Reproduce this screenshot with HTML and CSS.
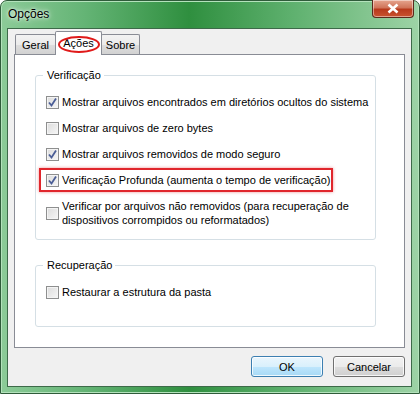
FILE: index.html
```html
<!doctype html>
<html lang="pt">
  <head>
    <meta charset="UTF-8" />
    <title>Opções</title>
    <link rel="stylesheet" href="styles.css">
  </head>
  <body>
    <div class="window">
      <div class="titlebar">
        <span class="title">Opções</span>
        <button class="close-btn">
          <svg width="14" height="11" viewBox="0 0 14 11">
            <path d="M2.5 1.5 L11.5 9.5 M11.5 1.5 L2.5 9.5" stroke="#fff" stroke-width="2.6" />
          </svg>
        </button>
      </div>

      <div class="client">
        <div class="tabs">
          <div class="tab tab-geral">Geral</div>
          <div class="tab active">
            Ações
            <span class="circle"></span>
          </div>
          <div class="tab tab-sobre">Sobre</div>
        </div>

        <div class="panel">
          <div class="group group-verif">
            <div class="group-title">Verificação</div>
            <label class="check">
              <span class="box checked"></span>
              <span>Mostrar arquivos encontrados em diretórios ocultos do sistema</span>
            </label>
            <label class="check">
              <span class="box"></span>
              <span>Mostrar arquivos de zero bytes</span>
            </label>
            <label class="check">
              <span class="box checked"></span>
              <span>Mostrar arquivos removidos de modo seguro</span>
            </label>
            <label class="check highlight">
              <span class="box checked"></span>
              <span>Verificação Profunda (aumenta o tempo de verificação)</span>
            </label>
            <label class="check multi">
              <span class="box"></span>
              <span class="multi-text">Verificar por arquivos não removidos (para recuperação de dispositivos corrompidos ou reformatados)</span>
            </label>
          </div>

          <div class="group group-recup">
            <div class="group-title">Recuperação</div>
            <label class="check">
              <span class="box"></span>
              <span>Restaurar a estrutura da pasta</span>
            </label>
          </div>
        </div>

        <div class="buttons">
          <button class="btn default">OK</button>
          <button class="btn">Cancelar</button>
        </div>
      </div>
    </div>
  </body>
</html>
```

FILE: styles.css
```css
* {
  box-sizing: border-box;
  margin: 0;
  padding: 0;
}

body {
  width: 420px;
  height: 394px;
  overflow: hidden;
  font-family: "Liberation Sans", Arial, sans-serif;
  font-size: 11px;
  color: #000;
  background: #fff;
}

.window {
  width: 420px;
  height: 394px;
  border: 1px solid #2f5c3a;
  border-radius: 7px 7px 0 0;
  background: linear-gradient(90deg, #8ccb98 0%, #64b475 20%, #2f8f3f 45%, #5fb16f 70%, #9dd3a6 100%);
  box-shadow: inset 0 0 0 1px #b4e2bc;
  display: flex;
  flex-direction: column;
}

.titlebar {
  height: 27px;
  display: flex;
  align-items: flex-start;
  justify-content: space-between;
  padding-left: 7px;
}

.title {
  margin-top: 6px;
  font-size: 12px;
  color: #000;
  text-shadow: 0 0 6px rgba(255, 255, 255, 0.9), 0 0 3px rgba(255, 255, 255, 0.9);
}

.close-btn {
  width: 42px;
  height: 18px;
  margin-right: 5px;
  margin-top: -1px;
  border: 1px solid #5a2a1c;
  border-top: none;
  border-radius: 0 0 4px 4px;
  background: linear-gradient(#e6a58f 0%, #d0745a 45%, #b8391c 55%, #c9532f 100%);
  box-shadow: inset 0 0 0 1px rgba(255, 255, 255, 0.45);
  display: flex;
  align-items: center;
  justify-content: center;
}

.client {
  flex: 1;
  margin: 0 7px 6px 6px;
  background: #f0f0f0;
  border: 1px solid #3d6a49;
  display: flex;
  flex-direction: column;
  padding: 0 6px;
}

.tabs {
  display: flex;
  align-items: flex-end;
  height: 25px;
}

.tab {
  height: 20px;
  line-height: 21px;
  text-align: center;
  border: 1px solid #898c95;
  border-bottom: none;
  border-radius: 2px 2px 0 0;
  background: linear-gradient(#f3f3f3 0%, #ebebeb 50%, #dddddd 51%, #d2d2d2 100%);
}

.tab-geral {
  width: 41px;
  margin-left: 1px;
}

.tab-sobre {
  width: 39px;
  margin-left: -1px;
}

.tab.active {
  position: relative;
  z-index: 1;
  width: 47px;
  height: 24px;
  margin-bottom: -1px;
  margin-left: -1px;
  line-height: 22px;
  background: #fff;
}

.circle {
  position: absolute;
  left: 2px;
  top: 4px;
  width: 42px;
  height: 17px;
  border: 2px solid #e01a1a;
  border-radius: 50%;
}

.panel {
  height: 294px;
  background: #fff;
  border: 1px solid #898c95;
  padding: 20px 28px 0 20px;
}

.group {
  border: 1px solid #d5dfe5;
  border-radius: 3px;
  padding: 0 4px 0 10px;
}

.group-verif {
  height: 165px;
}

.group-recup {
  height: 62px;
  margin-top: 25px;
}

.group-title {
  width: max-content;
  height: 14px;
  line-height: 14px;
  margin: -8px 0 7px -3px;
  padding: 0 3px 0 4px;
  background: #fff;
}

.check {
  display: flex;
  align-items: center;
  gap: 3px;
  height: 26px;
  line-height: 14px;
  white-space: nowrap;
}

.check.highlight {
  height: 24px;
  width: 294px;
  margin: 1px 0 1px -7px;
  padding-left: 5px;
  border: 2px solid #e0262c;
  box-shadow: 0 0 3px rgba(224, 38, 44, 0.5);
}

.check.multi {
  height: 40px;
  margin-top: 1px;
}

.multi-text {
  white-space: normal;
  width: 290px;
}

.box {
  flex: none;
  width: 13px;
  height: 13px;
  border: 1px solid #8e8f8f;
  background: linear-gradient(135deg, #dcdcdc 0%, #f6f6f6 100%);
  box-shadow: inset 0 0 0 1px #f4f4f4;
}

.box.checked {
  background: url("data:image/svg+xml,%3Csvg xmlns='http://www.w3.org/2000/svg' width='11' height='11'%3E%3Cpath d='M2 5.5 L4.5 8.5 L9 1.5' fill='none' stroke='%234a5d96' stroke-width='1.8'/%3E%3C/svg%3E") center no-repeat, linear-gradient(135deg, #dcdcdc 0%, #f6f6f6 100%);
}

.buttons {
  display: flex;
  justify-content: flex-end;
  gap: 10px;
  padding-top: 8px;
}

.btn {
  width: 72px;
  height: 21px;
  font-family: "Liberation Sans", Arial, sans-serif;
  font-size: 11px;
  color: #000;
  border: 1px solid #707070;
  border-radius: 3px;
  background: linear-gradient(#f2f2f2 0%, #ebebeb 50%, #dddddd 51%, #cfcfcf 100%);
  box-shadow: inset 0 0 0 1px rgba(255, 255, 255, 0.8);
}

.btn.default {
  border-color: #3c7fb1;
  background: linear-gradient(#eaf6fd 0%, #d9f0fc 50%, #bee6fd 51%, #a7d9f5 100%);
}
```
